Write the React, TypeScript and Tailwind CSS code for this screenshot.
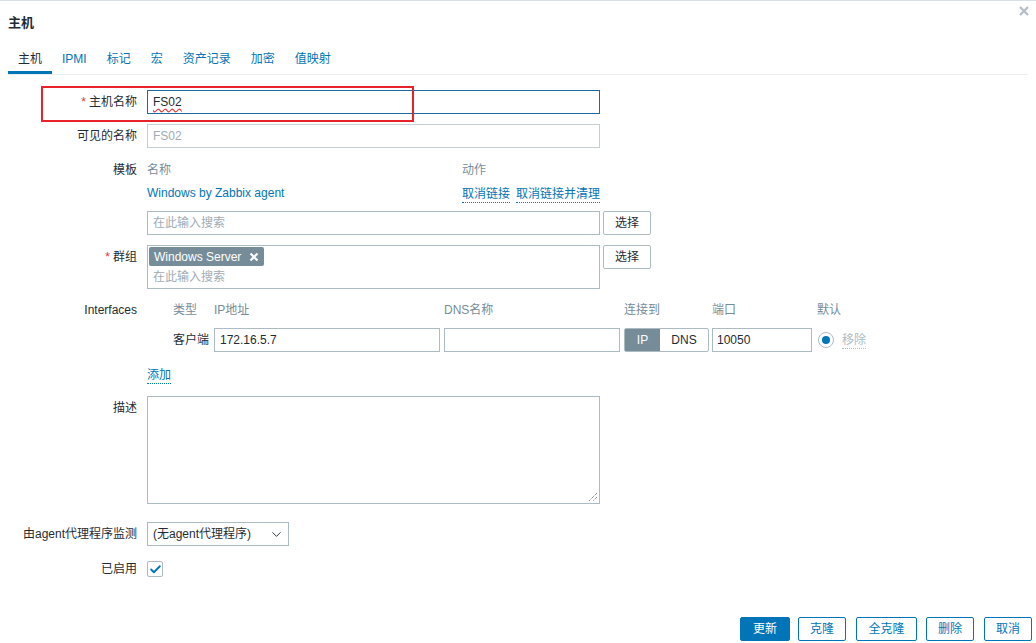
import { ChevronDown, Check } from 'lucide-react';

const font = { fontFamily: '"Liberation Sans", "Noto Sans CJK SC", sans-serif' };

const tabs = ['主机', 'IPMI', '标记', '宏', '资产记录', '加密', '值映射'];

function Label({ children, req }: { children: React.ReactNode; req?: boolean }) {
  return (
    <div className="w-[137px] shrink-0 text-right text-[12px] text-[#1f2c33]">
      {req && <span className="text-[#e33734] mr-[3px]">*</span>}
      {children}
    </div>
  );
}

function Btn({ children, primary, w }: { children: React.ReactNode; primary?: boolean; w: string }) {
  return (
    <button
      className={
        'h-[24px] rounded-[2px] border border-[#0275b8] text-[12px] ' +
        w +
        (primary ? ' bg-[#0275b8] text-white' : ' bg-white text-[#0275b8]')
      }
    >
      {children}
    </button>
  );
}

export default function App() {
  return (
    <div style={font} className="relative w-[1036px] h-[643px] bg-white border-t border-[#d9dfe3] text-[12px] text-[#1f2c33] overflow-hidden">
      {/* header */}
      <div className="h-[42px] flex items-center justify-between pl-[8px] pr-[6px]">
        <div className="text-[13px] font-bold mt-[1px]">主机</div>
        <svg width="12" height="12" viewBox="0 0 12 12" className="self-start mt-[4px]">
          <path d="M2 2 L10 10 M10 2 L2 10" stroke="#b4bfc5" strokeWidth="2.4" />
        </svg>
      </div>

      {/* tabs */}
      <div className="ml-[8px] mr-[8px] flex border-b border-[#ebeef0]">
        {tabs.map((t, i) => (
          <div
            key={t}
            className={
              'h-[31px] px-[10px] flex items-center text-[12px] ' +
              (i === 0 ? 'text-[#1f2c33] border-b-[3px] border-[#0275b8] pt-[3px]' : 'text-[#0275b8]')
            }
          >
            {t}
          </div>
        ))}
      </div>

      {/* form */}
      <div className="flex flex-col">
        <div className="mt-[15px] flex items-center gap-[10px]">
          <Label req>主机名称</Label>
          <div className="w-[453px] h-[24px] border border-[#1d6aa3] px-[5px] flex items-center">
            <span className="underline decoration-wavy decoration-[#e33734] underline-offset-2">FS02</span>
          </div>
        </div>

        <div className="mt-[10px] flex items-center gap-[10px]">
          <Label>可见的名称</Label>
          <div className="w-[453px] h-[24px] border border-[#c4ced3] px-[5px] flex items-center text-[#a0acb3]">FS02</div>
        </div>

        <div className="mt-[12px] flex items-center gap-[10px] h-[20px]">
          <Label>模板</Label>
          <div className="flex text-[#768d99]">
            <div className="w-[315px]">名称</div>
            <div>动作</div>
          </div>
        </div>
        <div className="mt-[3px] flex items-center gap-[10px] h-[20px]">
          <div className="w-[137px]" />
          <div className="flex items-center">
            <div className="w-[315px] text-[#0275b8]">Windows by Zabbix agent</div>
            <div className="flex gap-[6px] text-[#0275b8] mt-[3px]">
              <span className="border-b border-dotted border-[#0275b8] leading-[15px]">取消链接</span>
              <span className="border-b border-dotted border-[#0275b8] leading-[15px]">取消链接并清理</span>
            </div>
          </div>
        </div>
        <div className="mt-[8px] flex items-center gap-[10px]">
          <div className="w-[137px]" />
          <div className="w-[453px] h-[24px] border border-[#acbbc2] px-[5px] flex items-center text-[#a0acb3]">在此输入搜索</div>
          <button className="-ml-[7px] w-[48px] h-[24px] border border-[#acbbc2] rounded-[2px] bg-white">选择</button>
        </div>

        <div className="mt-[10px] flex items-start gap-[10px]">
          <div className="h-[24px] flex items-center"><Label req>群组</Label></div>
          <div className="w-[453px] h-[44px] border border-[#acbbc2] p-[1px] flex flex-col items-start">
            <div className="h-[19px] px-[5px] bg-[#768d99] text-white flex items-center gap-[8px] rounded-[2px]">
              Windows Server
              <svg width="10" height="10" viewBox="0 0 10 10">
                <path d="M1.5 1.5 L8.5 8.5 M8.5 1.5 L1.5 8.5" stroke="#fff" strokeWidth="2.2" />
              </svg>
            </div>
            <div className="mt-[2px] px-[4px] text-[#a0acb3]">在此输入搜索</div>
          </div>
          <button className="-ml-[7px] w-[48px] h-[24px] border border-[#acbbc2] rounded-[2px] bg-white">选择</button>
        </div>

        <div className="mt-[11px] flex items-center gap-[10px] h-[20px]">
          <Label>Interfaces</Label>
          <div className="flex text-[#768d99]">
            <div className="w-[67px] pl-[26px]">类型</div>
            <div className="w-[230px]">IP地址</div>
            <div className="w-[180px]">DNS名称</div>
            <div className="w-[88px]">连接到</div>
            <div className="w-[105px]">端口</div>
            <div>默认</div>
          </div>
        </div>
        <div className="mt-[8px] flex items-center gap-[10px]">
          <div className="w-[137px]" />
          <div className="flex items-center">
            <div className="w-[62px] text-right">客户端</div>
            <div className="ml-[5px] w-[226px] h-[24px] border border-[#acbbc2] px-[5px] flex items-center">172.16.5.7</div>
            <div className="ml-[4px] w-[176px] h-[24px] border border-[#acbbc2]" />
            <div className="ml-[4px] w-[85px] h-[24px] border border-[#acbbc2] rounded-[2px] flex overflow-hidden">
              <div className="w-[35px] bg-[#768d99] text-white flex items-center justify-center">IP</div>
              <div className="flex-1 flex items-center justify-center">DNS</div>
            </div>
            <div className="ml-[3px] w-[100px] h-[24px] border border-[#acbbc2] px-[4px] flex items-center">10050</div>
            <div className="ml-[6px] w-[16px] h-[16px] rounded-full border border-[#acbbc2] flex items-center justify-center">
              <div className="w-[8px] h-[8px] rounded-full bg-[#0275b8]" />
            </div>
            <span className="ml-[8px] mt-[2px] text-[#acbbc2] border-b border-dotted border-[#acbbc2] leading-[15px]">移除</span>
          </div>
        </div>

        <div className="mt-[12px] flex items-center gap-[10px] h-[20px]">
          <div className="w-[137px]" />
          <span className="mt-[3px] text-[#0275b8] border-b border-dotted border-[#0275b8] leading-[15px]">添加</span>
        </div>

        <div className="mt-[12px] flex items-start gap-[10px]">
          <div className="h-[24px] flex items-center"><Label>描述</Label></div>
          <div className="relative w-[453px] h-[108px] border border-[#acbbc2]">
            <svg width="10" height="10" viewBox="0 0 10 10" className="absolute right-[1px] bottom-[1px]">
              <path d="M9 1 L1 9 M9 5 L5 9" stroke="#555" strokeWidth="1" strokeDasharray="1 1" />
            </svg>
          </div>
        </div>

        <div className="mt-[18px] flex items-center gap-[10px]">
          <Label>由agent代理程序监测</Label>
          <div className="w-[142px] h-[24px] border border-[#acbbc2] pl-[5px] pr-[4px] flex items-center justify-between">
            <span>(无agent代理程序)</span>
            <ChevronDown size={15} strokeWidth={1.5} color="#1f2c33" />
          </div>
        </div>

        <div className="mt-[14px] flex items-center gap-[10px]">
          <Label>已启用</Label>
          <div className="w-[16px] h-[16px] border border-[#acbbc2] rounded-[2px] flex items-center justify-center">
            <Check size={13} strokeWidth={3.5} color="#0275b8" />
          </div>
        </div>

        <div className="mt-[39px] flex justify-end pr-[4px]">
          <Btn primary w="w-[50px]">更新</Btn>
          <Btn w="w-[48px] ml-[8px]">克隆</Btn>
          <Btn w="w-[61px] ml-[10px]">全克隆</Btn>
          <Btn w="w-[48px] ml-[9px]">删除</Btn>
          <Btn w="w-[48px] ml-[10px]">取消</Btn>
        </div>
      </div>

      {/* red annotation box */}
      <div className="absolute left-[41px] top-[85px] w-[373px] h-[36px] border-2 border-[#e8222a]" />
    </div>
  );
}
